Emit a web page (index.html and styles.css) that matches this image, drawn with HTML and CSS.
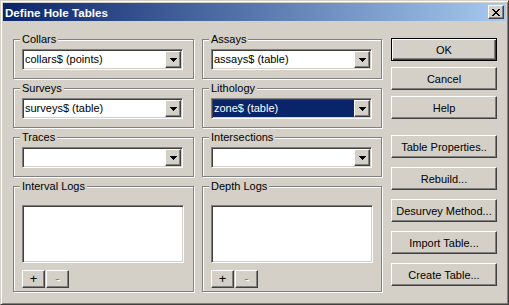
FILE: index.html
```html
<!DOCTYPE html>
<html lang="en">
<head>
    <meta charset="UTF-8">
    <title>Define Hole Tables</title>
    <link rel="stylesheet" href="styles.css">
</head>
<body>
<div class="window">
    <div class="titlebar">
        <span class="title">Define Hole Tables</span>
        <button class="close-btn raised">
            <svg width="8" height="7" viewBox="0 0 8 7" shape-rendering="crispEdges">
                <path d="M0 0h2v1H0zM6 0h2v1H6zM1 1h2v1H1zM5 1h2v1H5zM2 2h4v1H2zM3 3h2v1H3zM2 4h4v1H2zM1 5h2v1H1zM5 5h2v1H5zM0 6h2v1H0zM6 6h2v1H6z" fill="#000"/>
            </svg>
        </button>
    </div>
    <div class="content">
        <div class="groups">
            <div class="group">
                <div class="group-label">Collars</div>
                <div class="combo">
                    <span class="combo-text">collars$ (points)</span>
                    <span class="combo-btn raised"><svg width="7" height="4" viewBox="0 0 7 4" shape-rendering="crispEdges"><path d="M0 0h7v1H0zM1 1h5v1H1zM2 2h3v1H2zM3 3h1v1H3z" fill="#000"/></svg></span>
                </div>
            </div>
            <div class="group">
                <div class="group-label">Assays</div>
                <div class="combo">
                    <span class="combo-text">assays$ (table)</span>
                    <span class="combo-btn raised"><svg width="7" height="4" viewBox="0 0 7 4" shape-rendering="crispEdges"><path d="M0 0h7v1H0zM1 1h5v1H1zM2 2h3v1H2zM3 3h1v1H3z" fill="#000"/></svg></span>
                </div>
            </div>
            <div class="group">
                <div class="group-label">Surveys</div>
                <div class="combo">
                    <span class="combo-text">surveys$ (table)</span>
                    <span class="combo-btn raised"><svg width="7" height="4" viewBox="0 0 7 4" shape-rendering="crispEdges"><path d="M0 0h7v1H0zM1 1h5v1H1zM2 2h3v1H2zM3 3h1v1H3z" fill="#000"/></svg></span>
                </div>
            </div>
            <div class="group">
                <div class="group-label">Lithology</div>
                <div class="combo">
                    <span class="combo-text selected">zone$ (table)</span>
                    <span class="combo-btn raised"><svg width="7" height="4" viewBox="0 0 7 4" shape-rendering="crispEdges"><path d="M0 0h7v1H0zM1 1h5v1H1zM2 2h3v1H2zM3 3h1v1H3z" fill="#000"/></svg></span>
                </div>
            </div>
            <div class="group">
                <div class="group-label">Traces</div>
                <div class="combo">
                    <span class="combo-text"></span>
                    <span class="combo-btn raised"><svg width="7" height="4" viewBox="0 0 7 4" shape-rendering="crispEdges"><path d="M0 0h7v1H0zM1 1h5v1H1zM2 2h3v1H2zM3 3h1v1H3z" fill="#000"/></svg></span>
                </div>
            </div>
            <div class="group">
                <div class="group-label">Intersections</div>
                <div class="combo">
                    <span class="combo-text"></span>
                    <span class="combo-btn raised"><svg width="7" height="4" viewBox="0 0 7 4" shape-rendering="crispEdges"><path d="M0 0h7v1H0zM1 1h5v1H1zM2 2h3v1H2zM3 3h1v1H3z" fill="#000"/></svg></span>
                </div>
            </div>
            <div class="group logs">
                <div class="group-label">Interval Logs</div>
                <div class="listbox"></div>
                <div class="list-buttons">
                    <button class="small-btn raised">+</button>
                    <button class="small-btn raised disabled">-</button>
                </div>
            </div>
            <div class="group logs">
                <div class="group-label">Depth Logs</div>
                <div class="listbox"></div>
                <div class="list-buttons">
                    <button class="small-btn raised">+</button>
                    <button class="small-btn raised disabled">-</button>
                </div>
            </div>
        </div>
        <div class="actions">
            <button class="btn default">OK</button>
            <button class="btn raised">Cancel</button>
            <button class="btn raised">Help</button>
            <button class="btn raised spaced">Table Properties..</button>
            <button class="btn raised">Rebuild...</button>
            <button class="btn raised">Desurvey Method...</button>
            <button class="btn raised">Import Table...</button>
            <button class="btn raised">Create Table...</button>
        </div>
    </div>
</div>
</body>
</html>
```

FILE: styles.css
```css
body {
    margin: 0;
    background-color: #d4d0c8;
    font-family: "Liberation Sans", Arial, sans-serif;
    font-size: 11px;
    color: #000;
}
button {
    margin: 0;
    padding: 0;
    font-family: inherit;
    font-size: 11px;
    color: #000;
    background-color: #d4d0c8;
}
.window {
    width: 509px;
    height: 305px;
    box-sizing: border-box;
    padding: 2px;
    border: 1px solid;
    border-color: #d4d0c8 #404040 #404040 #d4d0c8;
    box-shadow: inset 1px 1px #fff, inset -1px -1px #808080;
    background-color: #d4d0c8;
}
.titlebar {
    height: 18px;
    display: flex;
    align-items: center;
    justify-content: space-between;
    padding: 0 2px 0 2px;
    background: linear-gradient(to right, #0a246a, #a6caf0);
}
.title {
    color: #fff;
    font-weight: bold;
    font-size: 11.6px;
}
/* classic 3d raised edge */
.raised {
    box-sizing: border-box;
    border: 1px solid;
    border-color: #fff #404040 #404040 #fff;
    box-shadow: inset -1px -1px #808080;
}
.close-btn {
    width: 16px;
    height: 14px;
    display: flex;
    align-items: center;
    justify-content: center;
}
.content {
    display: flex;
    padding: 12px 0 0 10px;
}
.groups {
    display: grid;
    grid-template-columns: 181px 180px;
    column-gap: 8px;
    row-gap: 9px;
    padding-top: 6px;
    align-content: start;
}
.group {
    padding: 0 8px 8px 8px;
    border: 1px solid #808080;
    box-shadow: inset 1px 1px #fff, 1px 1px #fff;
}
.group-label {
    width: fit-content;
    margin: -7px 0 0 -2px;
    padding: 0 2px;
    line-height: 13px;
    background-color: #d4d0c8;
}
.combo {
    display: flex;
    width: 161px;
    height: 21px;
    box-sizing: border-box;
    padding: 1px;
    margin-top: 3px;
    border: 1px solid;
    border-color: #808080 #fff #fff #808080;
    box-shadow: inset 1px 1px #404040, inset -1px -1px #d4d0c8;
    background-color: #fff;
}
.combo-text {
    flex: 1;
    padding-left: 1px;
    line-height: 17px;
    white-space: nowrap;
}
.combo-text.selected {
    background-color: #0a246a;
    color: #fff;
}
.combo-btn {
    width: 16px;
    height: 17px;
    display: flex;
    align-items: center;
    justify-content: center;
    background-color: #d4d0c8;
}
.logs {
    padding-bottom: 3px;
}
.listbox {
    width: 162px;
    height: 58px;
    box-sizing: border-box;
    margin-top: 12px;
    border: 1px solid;
    border-color: #808080 #fff #fff #808080;
    box-shadow: inset 1px 1px #404040, inset -1px -1px #d4d0c8;
    background-color: #fff;
}
.list-buttons {
    display: flex;
    gap: 1px;
    margin-top: 7px;
}
.small-btn {
    width: 23px;
    height: 18px;
    font-size: 13px;
    line-height: 14px;
}
.small-btn.disabled {
    color: #808080;
    text-shadow: 1px 1px #fff;
}
.actions {
    display: flex;
    flex-direction: column;
    gap: 6px;
    width: 106px;
    margin: 5px 0 0 9px;
}
.btn {
    height: 23px;
    white-space: nowrap;
}
.btn.default {
    box-sizing: border-box;
    border: 1px solid #000;
    box-shadow: inset 1px 1px #fff, inset -1px -1px #404040, inset -2px -2px #808080;
}
.spaced {
    margin-top: 10px;
}
.spaced ~ .btn {
    margin-top: 3px;
}
```
